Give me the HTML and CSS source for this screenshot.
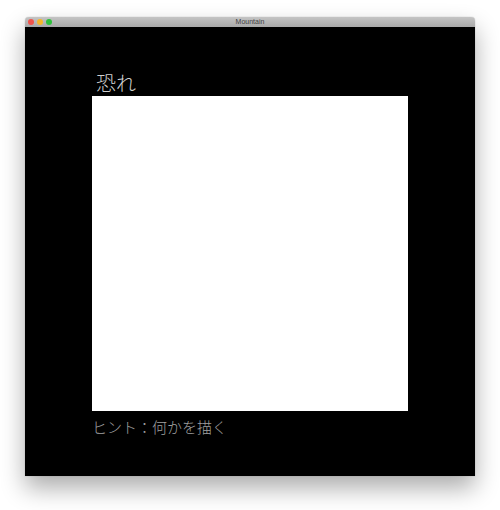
FILE: index.html
```html
<!DOCTYPE html>
<html lang="ja">
<head>
<meta charset="utf-8">
<title>Mountain</title>
<link rel="stylesheet" href="styles.css">
</head>
<body>
<div class="window">
  <div class="titlebar">
    <div class="lights">
      <span class="light red"></span>
      <span class="light yellow"></span>
      <span class="light green"></span>
    </div>
    <div class="wtitle">Mountain</div>
  </div>
  <div class="content">
    <div class="label">恐れ</div>
    <div class="canvas"></div>
    <div class="hint">ヒント：何かを描く</div>
  </div>
</div>
</body>
</html>
```

FILE: styles.css
```css
html, body {
  margin: 0;
  padding: 0;
  background: #ffffff;
}
body {
  width: 500px;
  height: 510px;
  overflow: hidden;
  font-family: "Noto Sans CJK JP", "Noto Sans", sans-serif;
}
.window {
  margin: 17px 0 0 25px;
  width: 450px;
  border-radius: 4px 4px 0 0;
  box-shadow: 0 12px 24px rgba(0, 0, 0, 0.33), 0 0 1px rgba(0, 0, 0, 0.4);
  overflow: hidden;
}
.titlebar {
  position: relative;
  height: 10px;
  background: linear-gradient(#c4c4c4, #a9a9a9);
  display: flex;
  align-items: center;
}
.lights {
  display: flex;
  gap: 3px;
  padding-left: 3px;
}
.light {
  width: 6px;
  height: 6px;
  border-radius: 50%;
}
.red { background: #f0544c; }
.yellow { background: #f5b72a; }
.green { background: #2ec13c; }
.wtitle {
  position: absolute;
  left: 0;
  right: 0;
  top: 0;
  text-align: center;
  font-family: "Liberation Sans", Arial, sans-serif;
  font-size: 7px;
  line-height: 10px;
  color: #404040;
}
.content {
  background: #000000;
  height: 449px;
  display: flex;
  flex-direction: column;
  padding: 44px 0 0 67px;
  box-sizing: border-box;
}
.label {
  font-size: 20px;
  line-height: 23px;
  font-weight: 300;
  color: #cfcfcf;
  margin: 0 0 2px 4px;
}
.canvas {
  width: 316px;
  height: 315px;
  background: #ffffff;
}
.hint {
  margin-top: 6px;
  font-size: 15px;
  line-height: 20px;
  font-weight: 300;
  color: #a0a0a0;
}
```
